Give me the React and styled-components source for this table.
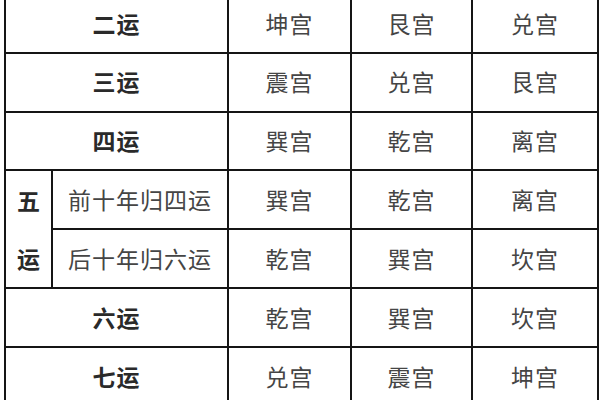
import styled, { createGlobalStyle } from "styled-components";

const GlobalStyle = createGlobalStyle`
  html, body {
    margin: 0;
    padding: 0;
    background: #fff;
    overflow: hidden;
  }
`;

// 整个页面
const Page = styled.div`
  width: 600px;
  height: 400px;
  overflow: hidden;
  background: #fff;
`;

const Table = styled.table`
  border-collapse: collapse;
  table-layout: fixed;
  width: 593px;
  margin: -7px 0 0 4px;
  font-family: "Noto Sans CJK SC", "Liberation Serif", serif;
  font-size: 23px;
  line-height: 1.2;
  color: #454545;
`;

const Row = styled.tr`
  height: 58.8px;
`;

const Cell = styled.td`
  border: 2px solid #151515;
  text-align: center;
  vertical-align: middle;
  padding: 0;
  font-weight: ${(p) => (p.$bold ? 700 : 400)};
  color: ${(p) => (p.$bold ? "#2a2a2a" : "#454545")};
  letter-spacing: 1px;
`;

// 竖排的"五运"
const Vertical = styled.div`
  display: flex;
  flex-direction: column;
  justify-content: space-around;
  align-items: center;
  height: 116px;
  padding-left: 1px;
`;

const rows = [
  ["二运", "坤宫", "艮宫", "兑宫"],
  ["三运", "震宫", "兑宫", "艮宫"],
  ["四运", "巽宫", "乾宫", "离宫"],
];

const lastRows = [
  ["六运", "乾宫", "巽宫", "坎宫"],
  ["七运", "兑宫", "震宫", "坤宫"],
];

export default function App() {
  return (
    <Page>
      <GlobalStyle />
      <Table>
        <colgroup>
          <col style={{ width: 47 }} />
          <col style={{ width: 176 }} />
          <col style={{ width: 123 }} />
          <col style={{ width: 121 }} />
          <col style={{ width: 126 }} />
        </colgroup>
        <tbody>
          {rows.map((r) => (
            <Row key={r[0]}>
              <Cell colSpan={2} $bold>{r[0]}</Cell>
              <Cell>{r[1]}</Cell>
              <Cell>{r[2]}</Cell>
              <Cell>{r[3]}</Cell>
            </Row>
          ))}
          <Row>
            <Cell rowSpan={2} $bold>
              <Vertical>
                <span>五</span>
                <span>运</span>
              </Vertical>
            </Cell>
            <Cell>前十年归四运</Cell>
            <Cell>巽宫</Cell>
            <Cell>乾宫</Cell>
            <Cell>离宫</Cell>
          </Row>
          <Row>
            <Cell>后十年归六运</Cell>
            <Cell>乾宫</Cell>
            <Cell>巽宫</Cell>
            <Cell>坎宫</Cell>
          </Row>
          {lastRows.map((r) => (
            <Row key={r[0]}>
              <Cell colSpan={2} $bold>{r[0]}</Cell>
              <Cell>{r[1]}</Cell>
              <Cell>{r[2]}</Cell>
              <Cell>{r[3]}</Cell>
            </Row>
          ))}
        </tbody>
      </Table>
    </Page>
  );
}
